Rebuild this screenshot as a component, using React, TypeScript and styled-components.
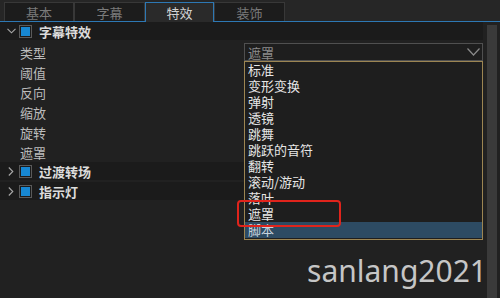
import React from 'react';
import styled, { createGlobalStyle } from 'styled-components';

const Global = createGlobalStyle`
  html, body { margin: 0; padding: 0; background: #212121; }
  body {
    width: 500px; height: 298px; overflow: hidden;
    font-family: "Noto Sans CJK SC", "Noto Sans", sans-serif;
  }
`;

const Root = styled.div`
  position: relative;
  width: 500px;
  height: 298px;
  display: flex;
  flex-direction: column;
  background: #212121;
  overflow: hidden;
`;

const TabBar = styled.div`
  height: 22px;
  box-sizing: border-box;
  display: flex;
  align-items: flex-end;
  padding-left: 4px;
  background: #262626;
  border-bottom: 1px solid #2d78b4;
`;

const Tab = styled.div<{ $active?: boolean; $w: number }>`
  width: ${p => p.$w}px;
  height: ${p => (p.$active ? 20 : 19)}px;
  margin-bottom: ${p => (p.$active ? -1 : 0)}px;
  box-sizing: border-box;
  display: flex;
  align-items: center;
  justify-content: center;
  font-size: 13px;
  color: ${p => (p.$active ? '#d2d2d2' : '#7a7a7a')};
  background: ${p => (p.$active ? '#2a2a2a' : '#1c1c1c')};
  border: 1px solid ${p => (p.$active ? '#2d78b4' : '#383838')};
  border-bottom: none;
`;

const Body = styled.div`
  flex: 1;
  display: flex;
  min-height: 0;
`;

const Panel = styled.div`
  width: 483px;
  display: flex;
  flex-direction: column;
`;

const ScrollCol = styled.div`
  flex: 1;
  display: flex;
  padding: 3px 3px 0 4px;
`;

const Thumb = styled.div`
  flex: 1;
  background: #3a3a3a;
`;

const GroupHeader = styled.div`
  height: 20px;
  box-sizing: border-box;
  display: flex;
  align-items: center;
  background: #1b1b1b;
  border-bottom: 2px solid #212121;
  padding-left: 6px;
  font-size: 13px;
  font-weight: 700;
  color: #dcdcdc;
`;

const Chevron = styled.span`
  width: 10px;
  height: 10px;
  display: flex;
  align-items: center;
  justify-content: center;
  margin-right: 3px;
`;

const Check = styled.span`
  width: 13px;
  height: 13px;
  box-sizing: border-box;
  border: 1px solid #5a5a5a;
  display: flex;
  align-items: center;
  justify-content: center;
  margin-right: 7px;
  &::after {
    content: '';
    width: 9px;
    height: 9px;
    background: #1787d2;
  }
`;

const PropRow = styled.div`
  height: 20px;
  display: flex;
  align-items: center;
  padding-left: 20px;
  font-size: 13px;
  color: #bcbcbc;
`;

const Select = styled.div`
  margin-left: auto;
  width: 239px;
  height: 18px;
  box-sizing: border-box;
  border: 1px solid #505050;
  background: #1e1e1e;
  display: flex;
  align-items: center;
  justify-content: space-between;
  padding: 0 2px 0 3px;
  color: #8a8a8a;
  font-size: 13px;
`;

const Menu = styled.div`
  position: absolute;
  left: 244px;
  top: 61px;
  width: 239px;
  height: 179px;
  box-sizing: border-box;
  border: 1px solid #9c8552;
  background: #1e1e1e;
  overflow: hidden;
  display: flex;
  flex-direction: column;
`;

const MenuItem = styled.div<{ $hl?: boolean }>`
  height: 16px;
  flex: none;
  line-height: 16px;
  padding-left: 3px;
  font-size: 13px;
  color: ${p => (p.$hl ? '#c8d4de' : '#e6e6e6')};
  background: ${p => (p.$hl ? '#2d4b63' : 'transparent')};
`;

const Annotation = styled.div`
  position: absolute;
  left: 237px;
  top: 200px;
  width: 104px;
  height: 27px;
  box-sizing: border-box;
  border: 2.5px solid #e0241c;
  border-radius: 4px;
`;

const Watermark = styled.div`
  position: absolute;
  right: 13px;
  top: 251px;
  font-family: "Noto Sans", "Open Sans", sans-serif;
  font-size: 30px;
  color: #c6c6c6;
  line-height: 40px;
`;

const Down = () => (
  <svg width="9" height="6" viewBox="0 0 9 6">
    <path d="M0.5 0.8 L4.5 4.8 L8.5 0.8" fill="none" stroke="#a8a8a8" strokeWidth="1.1" />
  </svg>
);

const Right = () => (
  <svg width="6" height="9" viewBox="0 0 6 9">
    <path d="M0.8 0.5 L4.8 4.5 L0.8 8.5" fill="none" stroke="#a8a8a8" strokeWidth="1.1" />
  </svg>
);

const SelectArrow = () => (
  <svg width="13" height="8" viewBox="0 0 13 8">
    <path d="M0.5 0.5 L6.5 7 L12.5 0.5" fill="none" stroke="#8a8a8a" strokeWidth="1.2" />
  </svg>
);

const tabs = [
  { label: '基本', w: 70 },
  { label: '字幕', w: 71 },
  { label: '特效', w: 69, active: true },
  { label: '装饰', w: 71 },
];

const props = ['类型', '阈值', '反向', '缩放', '旋转', '遮罩'];
const items = ['标准', '变形变换', '弹射', '透镜', '跳舞', '跳跃的音符', '翻转', '滚动/游动', '落叶', '遮罩', '脚本'];

export default function App() {
  return (
    <Root>
      <Global />
      <TabBar>
        {tabs.map(t => (
          <Tab key={t.label} $w={t.w} $active={t.active}>{t.label}</Tab>
        ))}
      </TabBar>
      <Body>
        <Panel>
          <GroupHeader>
            <Chevron><Down /></Chevron>
            <Check />
            字幕特效
          </GroupHeader>
          {props.map((p, i) => (
            <PropRow key={p}>
              {p}
              {i === 0 && (
                <Select>
                  遮罩
                  <SelectArrow />
                </Select>
              )}
            </PropRow>
          ))}
          <GroupHeader>
            <Chevron><Right /></Chevron>
            <Check />
            过渡转场
          </GroupHeader>
          <GroupHeader>
            <Chevron><Right /></Chevron>
            <Check />
            指示灯
          </GroupHeader>
        </Panel>
        <ScrollCol>
          <Thumb />
        </ScrollCol>
      </Body>
      <Menu>
        {items.map(it => (
          <MenuItem key={it} $hl={it === '脚本'}>{it}</MenuItem>
        ))}
      </Menu>
      <Annotation />
      <Watermark>sanlang2021</Watermark>
    </Root>
  );
}
